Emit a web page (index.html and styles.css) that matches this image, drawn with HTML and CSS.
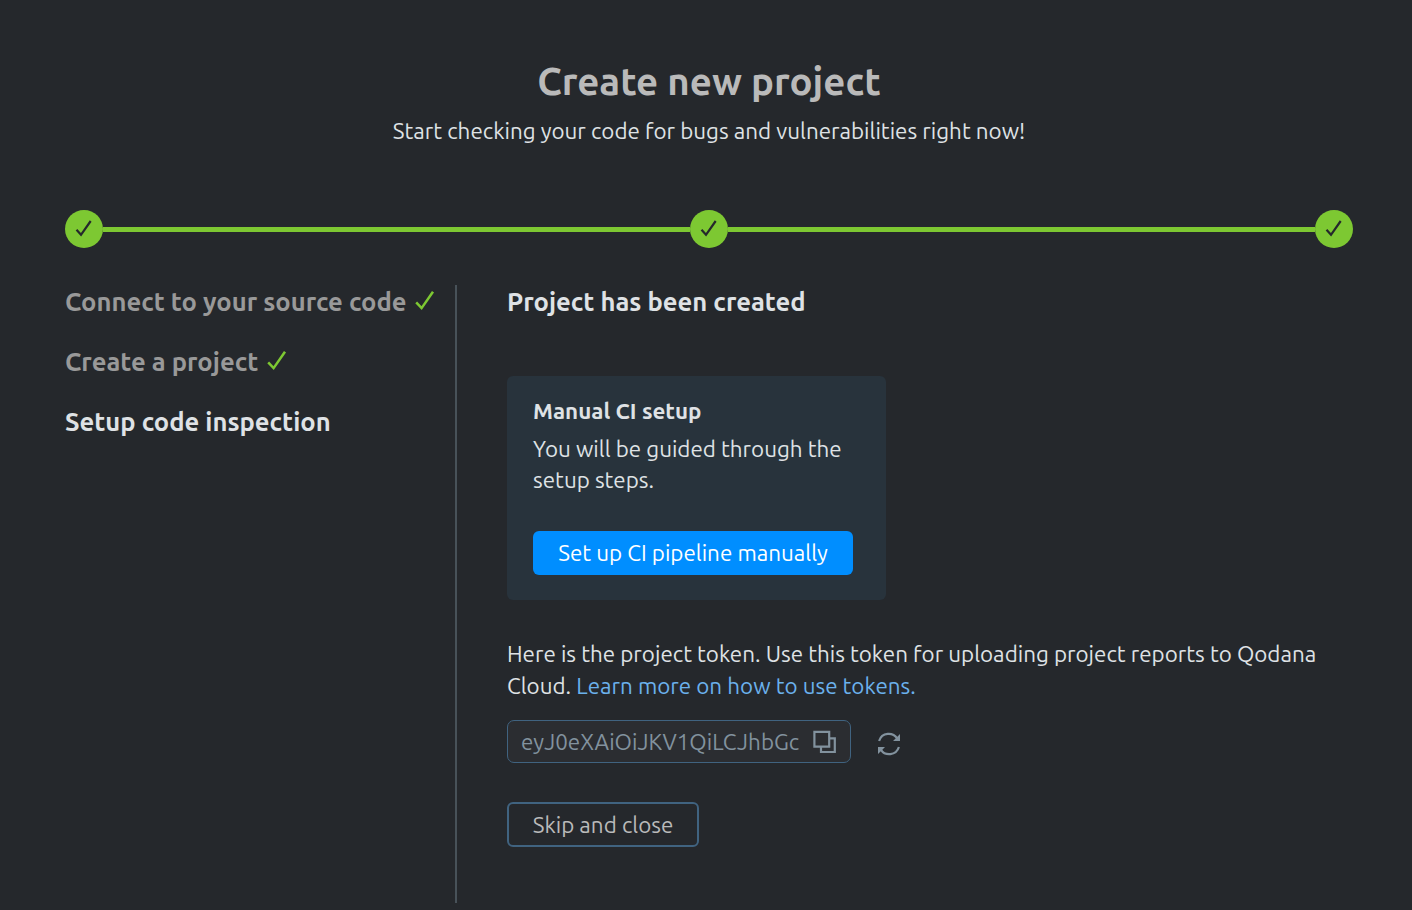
FILE: index.html
```html
<!DOCTYPE html>
<html lang="en">
<head>
<meta charset="utf-8">
<title>Create new project</title>
<link rel="stylesheet" href="styles.css">
</head>
<body>
<main class="page">
  <header class="intro">
    <h1 class="title">Create new project</h1>
    <p class="subtitle">Start checking your code for bugs and vulnerabilities right now!</p>
  </header>
  <div class="progress">
    <div class="dot"><svg width="38" height="38" viewBox="0 0 38 38"><path d="M11.5 19.8 16 24.8 25.7 11"/></svg></div>
    <div class="line"></div>
    <div class="dot"><svg width="38" height="38" viewBox="0 0 38 38"><path d="M11.5 19.8 16 24.8 25.7 11"/></svg></div>
    <div class="line"></div>
    <div class="dot"><svg width="38" height="38" viewBox="0 0 38 38"><path d="M11.5 19.8 16 24.8 25.7 11"/></svg></div>
  </div>
  <div class="columns">
    <nav class="steps">
      <div class="step done"><span>Connect to your source code</span><svg class="tick" width="20" height="22" viewBox="0 0 20 22"><path d="M1.2 12.3 6.6 18.1 18 1.8"/></svg></div>
      <div class="step done"><span>Create a project</span><svg class="tick" width="20" height="22" viewBox="0 0 20 22"><path d="M1.2 12.3 6.6 18.1 18 1.8"/></svg></div>
      <div class="step"><span>Setup code inspection</span></div>
    </nav>
    <section class="content">
      <h2 class="heading">Project has been created</h2>
      <div class="card">
        <h3 class="card-title">Manual CI setup</h3>
        <p class="card-text">You will be guided through the setup steps.</p>
        <button class="primary">Set up CI pipeline manually</button>
      </div>
      <p class="note"><span>Here is the project token. Use this token for uploading project reports to Qodana</span><br><span>Cloud.</span> <a class="link">Learn more on how to use tokens.</a></p>
      <div class="token-row">
        <div class="token"><span>eyJ0eXAiOiJKV1QiLCJhbGc</span><svg class="icon" width="24" height="24" viewBox="0 0 24 24"><path d="M1.4 1.9H16.2V16.7H1.4ZM16.2 8.4h5.6v13.6H8V16.7"/></svg></div>
        <svg class="refresh" width="24" height="24" viewBox="0 0 24 24"><path class="arc" d="M2.1 9C4.9 0 16 0 20 6.2M21.9 15C19.1 24 8 24 4 17.8"/><path class="head" d="M23 2v7h-7zM1 22v-7h7z"/></svg>
      </div>
      <button class="secondary">Skip and close</button>
    </section>
  </div>
</main>
</body>
</html>
```
FILE: styles.css
```css
* { box-sizing: border-box; }
body { margin: 0; background: #25282c; color: #dfe2e5; font: 22.4px/32px Ubuntu, "Noto Sans", sans-serif; }
h1, h2, h3, p { margin: 0; }
.page { width: 1412px; height: 910px; padding: 54px 59px 7px 65px; overflow: hidden; display: flex; flex-direction: column; }
.intro { text-align: center; }
.title { font-size: 38.4px; line-height: 54px; color: #bababa; }
.subtitle { margin-top: 7px; }
.progress { display: flex; align-items: center; margin-top: 63px; height: 38px; }
.dot { width: 38px; height: 38px; border-radius: 50%; background: #7dc832; }
.dot svg { display: block; fill: none; stroke: #25282c; stroke-width: 2.2; }
.line { flex: 1; height: 5px; background: #7dc832; }
.columns { display: flex; flex: 1; margin-top: 37px; }
.steps { flex: none; width: 392px; border-right: 2px solid #485259; font-weight: 700; font-size: 25.6px; white-space: nowrap; }
.step { display: flex; align-items: center; gap: 8.5px; height: 34px; margin-bottom: 26px; }
.done { color: #999; }
.tick { fill: none; stroke: #7dc832; stroke-width: 2.5; margin-bottom: 2px; }
.content { padding-left: 50px; flex: 1; }
.heading { font-size: 25.6px; line-height: 34px; }
.card { width: 379px; height: 224px; margin-top: 57px; padding: 19px 26px; border-radius: 6px; background: #28333c; }
.card-title { font-size: 22.4px; line-height: 32px; }
.card-text { margin-top: 6px; line-height: 31px; }
button { display: flex; align-items: center; justify-content: center; padding: 0; border: 0; border-radius: 6px; font: inherit; }
.primary { width: 320px; height: 44px; margin-top: 36px; background: #008eff; color: #fff; }
.note { margin-top: 38px; white-space: nowrap; }
.link { color: #6bb1ec; }
.token-row { display: flex; align-items: center; margin-top: 18px; }
.token { width: 344px; height: 43px; display: flex; align-items: center; justify-content: space-between; padding: 0 13px; border: 1px solid #406380; border-radius: 7px; background: #2b2d31; color: #82929e; }
.icon { fill: none; stroke: #82929e; stroke-width: 2.2; }
.refresh { margin: 4px 0 0 26px; }
.arc { fill: none; stroke: #82929e; stroke-width: 2.2; }
.head { fill: #82929e; }
.secondary { width: 192px; height: 45px; margin-top: 39px; border: 2px solid #406380; background: none; color: #bababa; }
```
